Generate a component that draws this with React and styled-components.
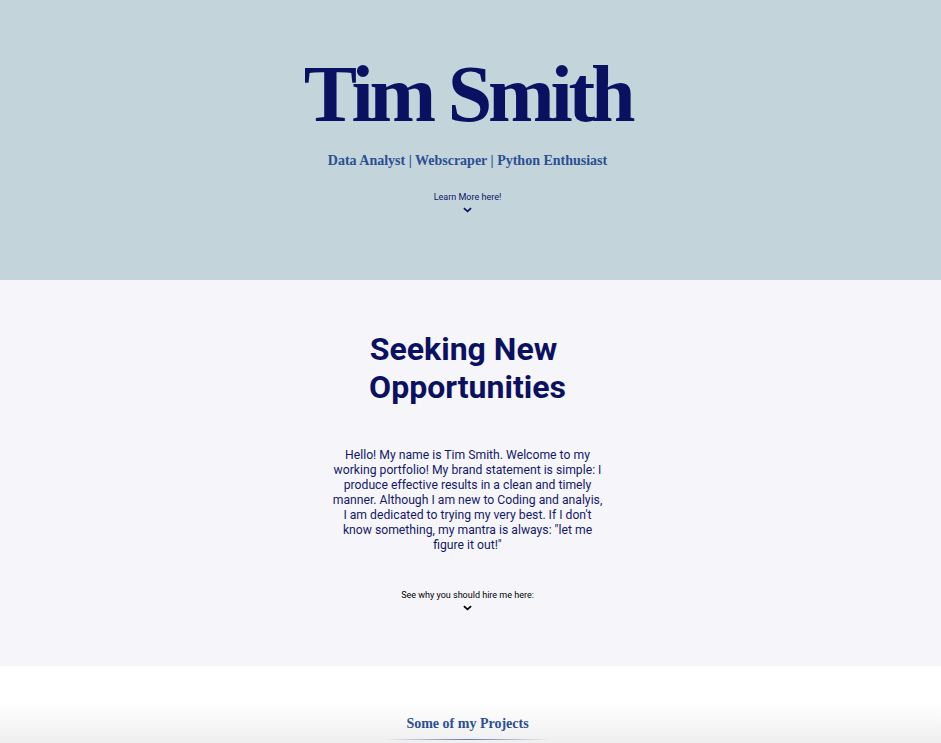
import React from 'react';
import styled, { createGlobalStyle } from 'styled-components';

const GlobalStyle = createGlobalStyle`
  * {
    box-sizing: border-box;
  }
  body {
    margin: 0;
    font-family: Roboto, "Liberation Sans", Arial, sans-serif;
    background-color: #fff;
  }
`;

function Chevron({ color }) {
  return (
    <ChevronIcon viewBox="0 0 10 6" color={color}>
      <path d="M1 1l4 3.6L9 1" fill="none" stroke="currentColor" strokeWidth="1.9" />
    </ChevronIcon>
  );
}

function App() {
  return (
    <>
      <GlobalStyle />
      <Hero>
        <Name>Tim Smith</Name>
        <Tagline>Data Analyst | Webscraper | Python Enthusiast</Tagline>
        <MoreLink color="#0c1466" gap="22px">
          Learn More here!
          <Chevron color="#0c1466" />
        </MoreLink>
      </Hero>
      <About>
        <AboutTitle>Seeking New{'\u00a0'} Opportunities</AboutTitle>
        <AboutText>
          Hello! My name is Tim Smith. Welcome to my working portfolio! My
          brand statement is simple: I produce effective results in a clean and
          timely manner. Although I am new to Coding and analyis, I am dedicated
          to trying my very best. If I don't know something, my mantra is
          always: "let me figure it out!"
        </AboutText>
        <MoreLink color="#000" gap="37px">
          See why you should hire me here:
          <Chevron color="#000" />
        </MoreLink>
      </About>
      <Projects>
        <ProjectsTitle>Some of my Projects</ProjectsTitle>
        <TitleRule />
      </Projects>
    </>
  );
}

export default App;

const Hero = styled.header`
  height: 280px;
  padding: 54px 6px 0 0;
  background-color: #c3d4db;
  display: flex;
  flex-direction: column;
  align-items: center;
`;

const Name = styled.h1`
  margin: 0;
  font-family: "Liberation Serif", "DejaVu Serif", serif;
  font-weight: 700;
  font-size: 80px;
  line-height: 80px;
  letter-spacing: -4.2px;
  color: #0b1161;
`;

const Tagline = styled.h2`
  margin: 18px 0 0;
  font-family: "Liberation Serif", "DejaVu Serif", serif;
  font-weight: 700;
  font-size: 14px;
  line-height: 18px;
  color: #2b4f92;
`;

const MoreLink = styled.div`
  margin-top: ${p => p.gap};
  display: flex;
  flex-direction: column;
  align-items: center;
  font-size: 9px;
  line-height: 11px;
  color: ${p => p.color};
`;

const ChevronIcon = styled.svg`
  width: 9px;
  height: 6px;
  margin-top: 4px;
  color: ${p => p.color};
`;

const About = styled.section`
  height: 386px;
  padding: 50px 6px 0 0;
  background-color: #f6f5fa;
  display: flex;
  flex-direction: column;
  align-items: center;
`;

const AboutTitle = styled.h2`
  width: 240px;
  margin: 0;
  text-align: center;
  font-size: 32px;
  line-height: 38px;
  font-weight: 700;
  color: #0b1161;
`;

const AboutText = styled.p`
  width: 270px;
  margin: 42px 0 0;
  text-align: center;
  font-size: 12.2px;
  line-height: 15px;
  color: #141a68;
`;

const Projects = styled.section`
  height: 77px;
  padding: 49px 6px 0 0;
  background: linear-gradient(to bottom, #fff 0px, #fff 36px, #efefef 100%);
  display: flex;
  flex-direction: column;
  align-items: center;
`;

const ProjectsTitle = styled.h3`
  margin: 0;
  font-family: "Liberation Serif", "DejaVu Serif", serif;
  font-weight: 700;
  font-size: 14px;
  line-height: 18px;
  color: #2b4f92;
`;

const TitleRule = styled.div`
  width: 165px;
  height: 1px;
  margin-top: 6px;
  background: linear-gradient(to right, rgba(43, 79, 146, 0), #5d7fb0 50%, rgba(43, 79, 146, 0));
`;
